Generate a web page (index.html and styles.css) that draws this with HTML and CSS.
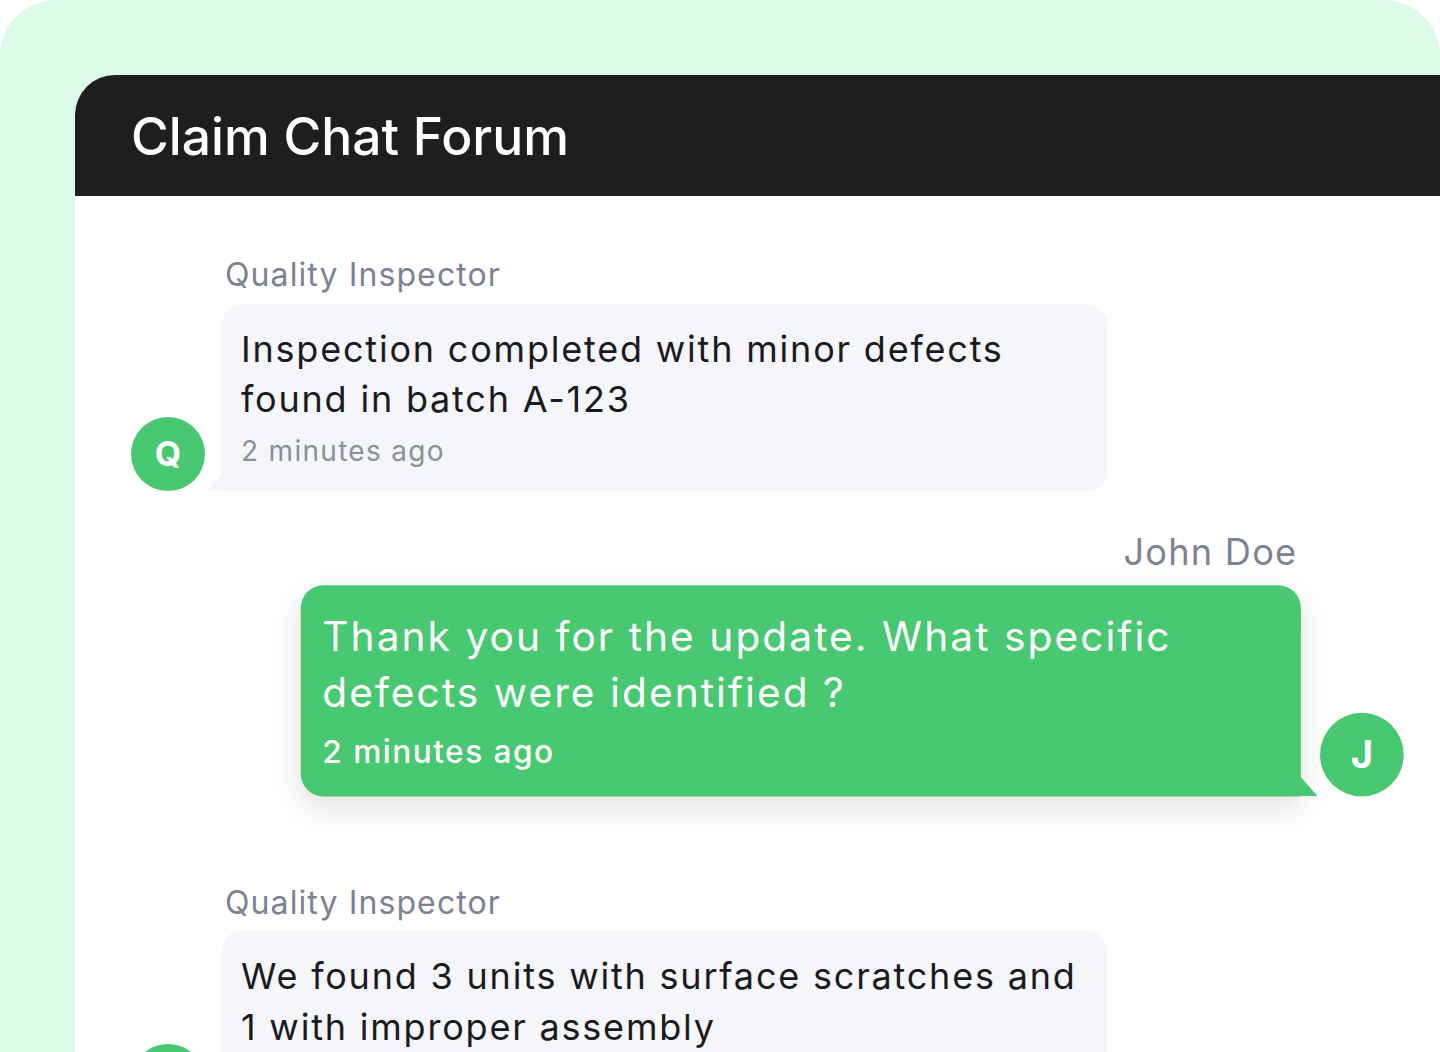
FILE: index.html
```html
<!DOCTYPE html>
<html lang="en">
<head>
    <meta charset="UTF-8">
    <meta name="viewport" content="width=device-width, initial-scale=1.0">
    <title>Claim Chat Forum</title>
    <link rel="stylesheet" href="styles.css">
</head>
<body>
    <div class="frame">
        <div class="card">
            <div class="card-header">
                <h1>Claim Chat Forum</h1>
            </div>
            <div class="chat">
                <div class="message">
                    <div class="avatar">Q</div>
                    <div class="msg-body">
                        <div class="sender">Quality Inspector</div>
                        <div class="bubble">
                            <p class="text">Inspection completed with minor defects found in batch A-123</p>
                            <span class="time">2 minutes ago</span>
                        </div>
                    </div>
                </div>

                <div class="message mine active">
                    <div class="avatar">J</div>
                    <div class="msg-body">
                        <div class="sender">John Doe</div>
                        <div class="bubble">
                            <p class="text">Thank you for the update. What specific defects were identified ?</p>
                            <span class="time">2 minutes ago</span>
                        </div>
                    </div>
                </div>

                <div class="message">
                    <div class="avatar">Q</div>
                    <div class="msg-body">
                        <div class="sender">Quality Inspector</div>
                        <div class="bubble">
                            <p class="text">We found 3 units with surface scratches and 1 with improper assembly</p>
                            <span class="time">2 minutes ago</span>
                        </div>
                    </div>
                </div>
            </div>
        </div>
    </div>
</body>
</html>
```

FILE: styles.css
```css
body {
    margin: 0;
    background-color: #ffffff;
    font-family: Inter, "Noto Sans", sans-serif;
}

.frame {
    background-color: #dcfce7;
    border-radius: 56px 56px 0 0;
    height: 1052px;
    padding: 75px 0 0 75px;
    box-sizing: border-box;
    overflow: hidden;
}

.card {
    background-color: #ffffff;
    border-top-left-radius: 40px;
    height: 100%;
    overflow: hidden;
}

.card-header {
    background-color: #1e1e1e;
    height: 121px;
    display: flex;
    align-items: center;
    padding-left: 56px;
}

h1 {
    margin: 0;
    color: white;
    font-size: 51.5px;
    font-weight: 500;
}

.chat {
    display: flex;
    flex-direction: column;
    gap: 76px;
    padding: 57px 114px 0 56px;
}

.message {
    display: flex;
    align-items: flex-end;
    gap: 17px;
}

.message.mine {
    flex-direction: row-reverse;
}

.message.active {
    transform: translateY(-24px) scale(1.13);
}

.avatar {
    width: 74px;
    height: 74px;
    flex-shrink: 0;
    border-radius: 50%;
    background-color: #48c870;
    color: white;
    font-size: 34px;
    font-weight: 700;
    display: flex;
    align-items: center;
    justify-content: center;
}

.msg-body {
    width: 885px;
}

.sender {
    color: #7c8294;
    font-size: 32px;
    line-height: 1.4;
    letter-spacing: 1.1px;
    padding: 0 3px;
    margin-bottom: 6px;
}

.mine .sender {
    text-align: right;
}

.bubble {
    position: relative;
    background-color: #f5f6fa;
    border-radius: 20px 20px 20px 0;
    padding: 20px 19px;
}

.bubble::before {
    content: "";
    position: absolute;
    left: -15px;
    bottom: 0;
    width: 16px;
    height: 18px;
    background-color: inherit;
    clip-path: polygon(100% 0, 100% 100%, 0 100%);
}

.mine .bubble {
    background-color: #48c870;
    border-radius: 20px 20px 0 20px;
    box-shadow: 0 10px 28px rgba(0, 0, 0, 0.12);
}

.mine .bubble::before {
    left: auto;
    right: -15px;
    clip-path: polygon(0 0, 100% 100%, 0 100%);
}

.text {
    margin: 0;
    color: #1a1a1f;
    font-size: 36px;
    line-height: 1.4;
    letter-spacing: 1.8px;
}

.time {
    display: block;
    margin-top: 7px;
    color: #8a8f9c;
    font-size: 28px;
    line-height: 1.4;
    letter-spacing: 1.3px;
}

.mine .text,
.mine .time {
    color: white;
}

.mine .time {
    font-weight: 500;
}
```
